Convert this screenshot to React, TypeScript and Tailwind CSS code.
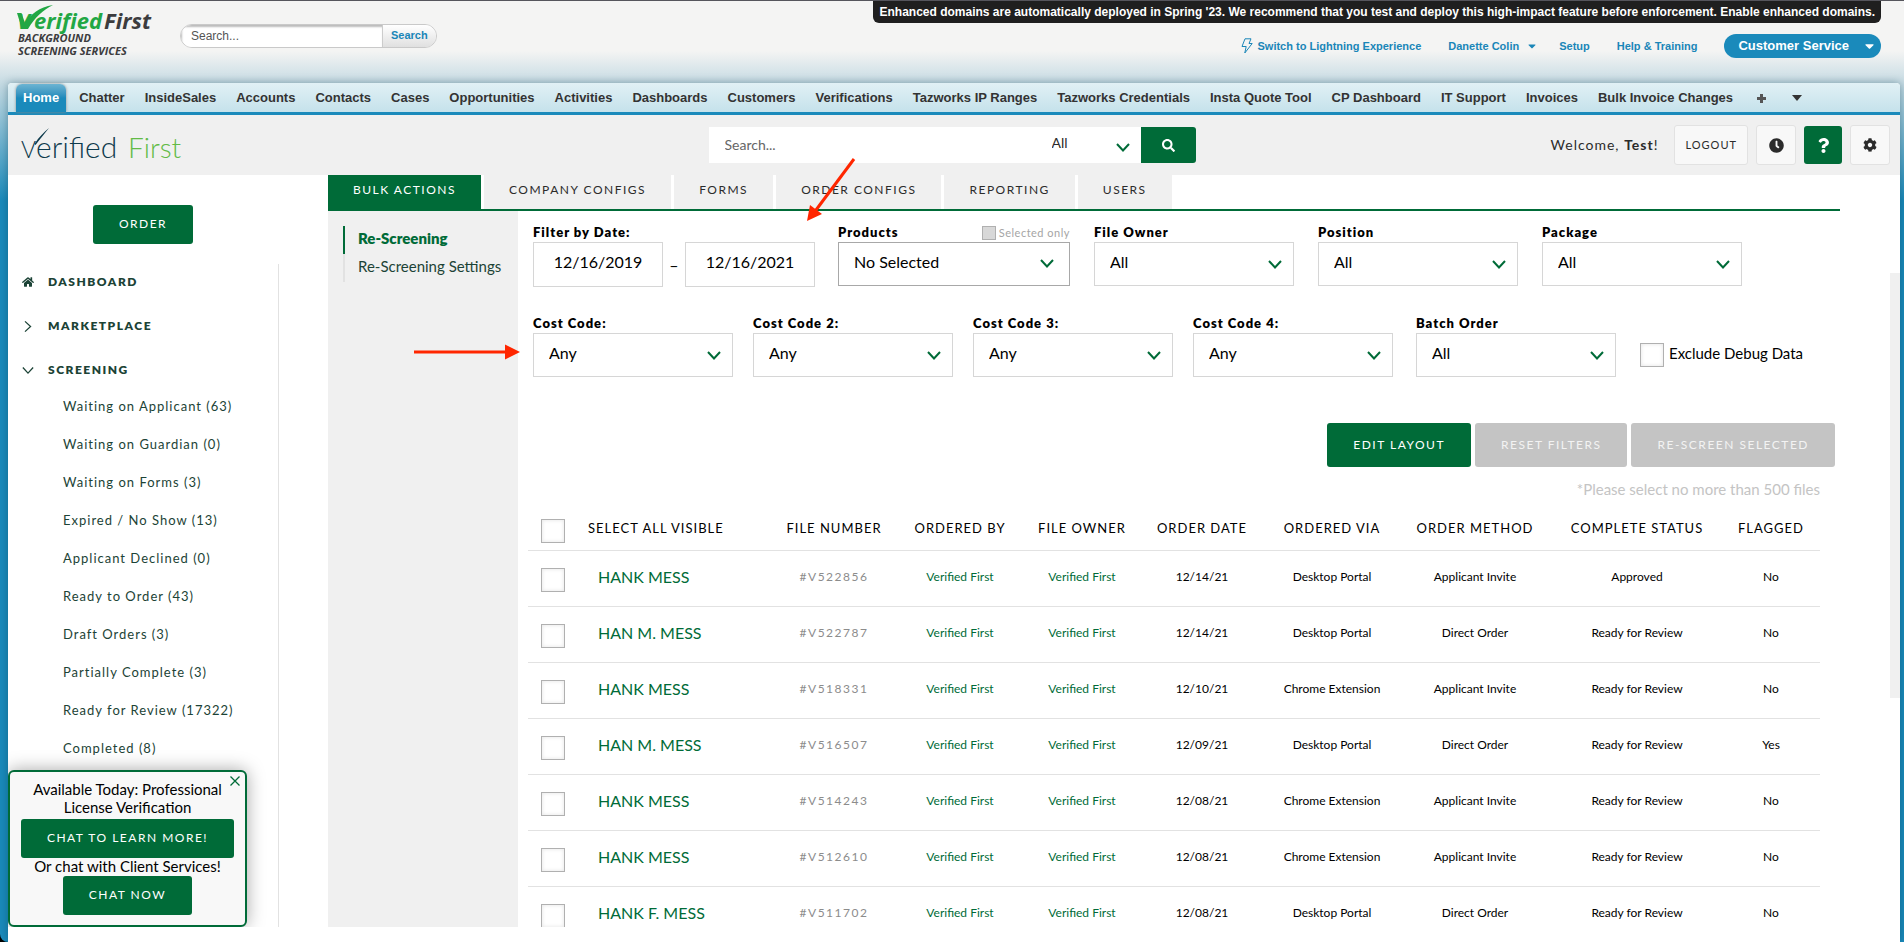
import { useState } from "react";
import { FaCaretDown, FaClock, FaCog, FaHome, FaQuestion, FaSearch } from "react-icons/fa";

const crmTabs = [
  "Home", "Chatter", "InsideSales", "Accounts", "Contacts", "Cases", "Opportunities", "Activities",
  "Dashboards", "Customers", "Verifications", "Tazworks IP Ranges", "Tazworks Credentials",
  "Insta Quote Tool", "CP Dashboard", "IT Support", "Invoices", "Bulk Invoice Changes",
];

const adminTabs = ["Bulk Actions", "Company Configs", "Forms", "Order Configs", "Reporting", "Users"];

const screeningLinks = [
  "Waiting on Applicant (63)",
  "Waiting on Guardian (0)",
  "Waiting on Forms (3)",
  "Expired / No Show (13)",
  "Applicant Declined (0)",
  "Ready to Order (43)",
  "Draft Orders (3)",
  "Partially Complete (3)",
  "Ready for Review (17322)",
  "Completed (8)",
];

const columns = [
  { label: "File Number", width: "w-[120px]" },
  { label: "Ordered By", width: "w-[132px]" },
  { label: "File Owner", width: "w-[112px]" },
  { label: "Order Date", width: "w-[128px]" },
  { label: "Ordered Via", width: "w-[132px]" },
  { label: "Order Method", width: "w-[154px]" },
  { label: "Complete Status", width: "w-[170px]" },
  { label: "Flagged", width: "w-[98px]" },
];

const files = [
  { name: "HANK MESS", number: "#V522856", date: "12/14/21", via: "Desktop Portal", method: "Applicant Invite", status: "Approved", flagged: "No" },
  { name: "HAN M. MESS", number: "#V522787", date: "12/14/21", via: "Desktop Portal", method: "Direct Order", status: "Ready for Review", flagged: "No" },
  { name: "HANK MESS", number: "#V518331", date: "12/10/21", via: "Chrome Extension", method: "Applicant Invite", status: "Ready for Review", flagged: "No" },
  { name: "HAN M. MESS", number: "#V516507", date: "12/09/21", via: "Desktop Portal", method: "Direct Order", status: "Ready for Review", flagged: "Yes" },
  { name: "HANK MESS", number: "#V514243", date: "12/08/21", via: "Chrome Extension", method: "Applicant Invite", status: "Ready for Review", flagged: "No" },
  { name: "HANK MESS", number: "#V512610", date: "12/08/21", via: "Chrome Extension", method: "Applicant Invite", status: "Ready for Review", flagged: "No" },
  { name: "HANK F. MESS", number: "#V511702", date: "12/08/21", via: "Desktop Portal", method: "Direct Order", status: "Ready for Review", flagged: "No" },
];

const checkboxClass =
  "block h-6 w-6 shrink-0 appearance-none border border-[#b0b0b0] bg-white shadow-[inset_0_0_4px_#e4e4e4] checked:bg-[#006b38]";

function Chevron({ className = "h-[9px] w-[14px]", weight = 2 }: { className?: string; weight?: number }) {
  return (
    <svg viewBox="0 0 14 9" className={className} fill="none" stroke="currentColor" strokeWidth={weight}>
      <path d="M1 1l6 6.5L13 1" />
    </svg>
  );
}

function SelectField({ id, label, value, dark = false }: { id: string; label: string; value: string; dark?: boolean }) {
  return (
    <div className={dark ? "w-[232px]" : "w-[200px]"}>
      <div className="flex h-5 items-center justify-between pt-[2px]">
        <label htmlFor={id} className="text-[13px] font-extrabold tracking-[1px]">{label}</label>
        {dark && (
          <label className="flex items-center gap-[3px] text-[11px] tracking-[0.5px] text-[#a5a5a5]">
            <input type="checkbox" disabled className="h-[14px] w-[14px] appearance-none border border-[#b0b0b0] bg-[#d8d8d8]" />
            Selected only
          </label>
        )}
      </div>
      <div className="relative">
        <select
          id={id}
          className={`h-11 w-full appearance-none border bg-white px-[15px] pb-1 text-base ${dark ? "border-[#a8a8a8]" : "border-[#d6d6d6]"}`}
        >
          <option>{value}</option>
        </select>
        <Chevron className={`pointer-events-none absolute h-[9px] w-[14px] text-[#006b38] ${dark ? "top-[17px] right-4" : "top-[18px] right-3"}`} />
      </div>
    </div>
  );
}

function CrmLogo() {
  return (
    <svg viewBox="0 0 144 60" className="h-[60px] w-36" role="img" aria-label="Verified First">
      <g fontFamily="Open Sans, sans-serif" fontSize="22" fontWeight="700" fontStyle="italic" fill="#22a744">
        <text x="3" y="28">V</text>
        <text x="20" y="28">erified</text>
        <text x="90" y="28" fill="#3c3c3e">First</text>
      </g>
      <path d="M3 12h4.500L11 22C17 13 25 6 39 4 29 9 21 16 14 28H8z" fill="#22a744" />
      <g fontFamily="Open Sans, sans-serif" fontSize="11" fontWeight="700" fontStyle="italic" fill="#3c3c3e">
        <text x="4" y="41">BACKGROUND</text>
        <text x="4" y="54">SCREENING SERVICES</text>
      </g>
    </svg>
  );
}

function PortalLogo() {
  return (
    <svg viewBox="0 0 172 40" className="h-10 w-[172px]" role="img" aria-label="Verified First">
      <g fontFamily="Lato, sans-serif" fontWeight="300" fill="#0d3a4c">
        <text x="7" y="33" fontSize="23">V</text>
        <text x="22" y="33" fontSize="30">erified</text>
        <text x="114" y="33" fontSize="28" fill="#62bb46">First</text>
      </g>
      <path d="M20.500 19C25 12 30 7 35 3 31 8 27 13 21.500 20z" fill="#0d3a4c" />
    </svg>
  );
}

function CrmHeader() {
  return (
    <header className="flex h-[82px] items-start justify-between font-['Liberation_Sans',Arial,sans-serif]">
      <div className="flex items-start pl-[14px]">
        <CrmLogo />
        <form className="mt-[23px] ml-[22px] flex h-6 overflow-hidden rounded-full border border-[#c9c9c9]">
          <input
            type="text"
            placeholder="Search..."
            aria-label="Search records"
            className="w-[201px] bg-white pl-[10px] text-xs shadow-[inset_1px_2px_2px_#bbb] placeholder:text-[#555]"
          />
          <button type="button" className="border-l border-[#ccc] bg-linear-to-b from-white to-[#e0e0e0] px-2 pb-[2px] text-[11px] font-bold text-[#1a86b8]">
            Search
          </button>
        </form>
      </div>
      <div className="mr-[23px] flex flex-col items-end">
        <p className="flex h-[22px] items-center rounded-b-md bg-[#1f1f1f] px-[6px] text-xs font-bold whitespace-nowrap text-white">
          Enhanced domains are automatically deployed in Spring '23. We recommend that you test and deploy this high-impact feature before enforcement. Enable enhanced domains.
        </p>
        <nav className="mt-[11px] flex h-6 items-center text-[11px] font-bold text-[#1a86b8]">
          <a href="#lightning" className="flex items-center gap-1">
            <svg viewBox="0 0 12 16" className="h-4 w-3" fill="none" stroke="currentColor" strokeLinejoin="round">
              <path d="M4 .8h6L8 5.500h3.200L3.800 15l1.400-6.500H1z" />
            </svg>
            Switch to Lightning Experience
          </a>
          <a href="#user" className="ml-[27px] flex items-center gap-2">
            Danette Colin
            <FaCaretDown className="h-3 w-[10px]" />
          </a>
          <a href="#setup" className="ml-[22px]">Setup</a>
          <a href="#help" className="ml-[27px]">Help &amp; Training</a>
          <button type="button" className="ml-[27px] flex h-6 items-center gap-[14px] rounded-full bg-[#1a8abb] pr-[5px] pl-[14px] text-[13px] font-bold text-white">
            Customer Service
            <FaCaretDown className="h-[14px]" />
          </button>
        </nav>
      </div>
    </header>
  );
}

function CrmTabBar() {
  return (
    <nav className="flex h-8 shrink-0 items-end rounded-t border-b-[3px] border-[#1a8abb] bg-linear-to-b from-[#e1f0f5] to-[#c5e2eb] pl-2 font-['Liberation_Sans',Arial,sans-serif] text-[13px] font-bold whitespace-nowrap text-[#333]">
      {crmTabs.map((tab, i) => (
        <a
          key={tab}
          href="#tab"
          className={
            i === 0
              ? "mr-[3px] flex h-7 items-center rounded-t-md bg-linear-to-b from-[#6cb4d2] to-[#1a8abb] to-50% px-[7px] text-white shadow-[0_0_3px_#888]"
              : "flex h-7 items-center px-[10px]"
          }
        >
          {tab}
        </a>
      ))}
      <a href="#more" aria-label="All tabs" className="flex h-7 items-center px-[14px]">
        <svg viewBox="0 0 9 9" className="h-[9px] w-[9px]" fill="#555"><path d="M3 0h3v3h3v3H6v3H3V6H0V3h3z" /></svg>
      </a>
      <button type="button" aria-label="More tabs" className="flex h-7 items-center px-3">
        <svg viewBox="0 0 10 6" className="h-[6px] w-[10px]" fill="#333"><path d="M0 0h10L5 6z" /></svg>
      </button>
    </nav>
  );
}

function PortalHeader() {
  const square = "flex h-10 w-10 items-center justify-center rounded-[3px] border border-[#e2e2e2] bg-[#f8f8f8] text-[#2b2b2b]";
  return (
    <div className="grid h-[60px] shrink-0 grid-cols-[1fr_auto_1fr] items-center bg-[#f0f0f0] pr-[10px] pl-[6px] text-[#2b2b2b]">
      <PortalLogo />
      <form className="flex h-9">
        <input type="text" placeholder="Search..." aria-label="Search files" className="w-[328px] bg-white px-4 text-sm placeholder:text-[#666]" />
        <div className="relative w-[104px] bg-white">
          <select aria-label="Search in" className="h-9 w-full appearance-none bg-white pb-1 pl-[15px] text-sm">
            <option>All</option>
          </select>
          <Chevron className="pointer-events-none absolute top-4 right-[11px] h-[9px] w-[14px] text-[#006b38]" />
        </div>
        <button type="button" aria-label="Search" className="flex w-[55px] items-center justify-center rounded-r-[3px] bg-[#006b38] text-white">
          <FaSearch size={13} />
        </button>
      </form>
      <div className="flex items-center justify-end gap-2">
        <p className="mr-2 text-sm tracking-[1px]">Welcome, <b>Test</b>!</p>
        <button type="button" className="h-10 rounded-[3px] border border-[#e2e2e2] bg-[#f8f8f8] px-[10px] text-[11px] tracking-[1px]">LOGOUT</button>
        <button type="button" aria-label="History" className={square}><FaClock size={15} /></button>
        <button type="button" aria-label="Help" className="flex h-[38px] w-[38px] items-center justify-center rounded-[3px] bg-[#006b38] text-white">
          <FaQuestion size={15} />
        </button>
        <button type="button" aria-label="Settings" className={square}><FaCog size={14} /></button>
      </div>
    </div>
  );
}

function Sidebar() {
  const heading = "flex h-11 items-center gap-[14px] pb-2 text-xs font-extrabold tracking-[1.500px]";
  return (
    <aside className="w-[271px] shrink-0 pt-[30px] text-[#1c4336]">
      <button type="button" className="ml-[85px] block h-[39px] w-[100px] rounded-[3px] bg-[#006b38] pb-[2px] text-xs tracking-[1.500px] text-white">ORDER</button>
      <nav className="mt-5 h-full border-r border-[#e2e2e2] pl-[14px]">
        <a href="#dashboard" className={heading}><FaHome className="w-3" />DASHBOARD</a>
        <a href="#marketplace" className={heading}>
          <Chevron className="h-[9px] w-3 -rotate-90" weight={1.5} />MARKETPLACE
        </a>
        <a href="#screening" className={heading}>
          <Chevron className="h-[9px] w-3" weight={1.5} />SCREENING
        </a>
        <ul className="-mt-2 pl-[41px] text-[13px] tracking-[1px]">
          {screeningLinks.map((link) => (
            <li key={link}>
              <a href="#files" className="flex h-[38px] items-center">{link}</a>
            </li>
          ))}
        </ul>
      </nav>
    </aside>
  );
}

function Filters() {
  const dateClass = "h-[45px] w-[130px] border border-[#d6d6d6] bg-white pb-[6px] text-center text-base";
  const [from, setFrom] = useState("12/16/2019");
  const [to, setTo] = useState("12/16/2021");
  return (
    <form className="pt-[11px] pl-[15px]">
      <div className="flex items-start">
        <div className="mr-[23px]">
          <label htmlFor="date-from" className="flex h-5 items-center pt-[2px] text-[13px] font-extrabold tracking-[1px]">Filter by Date:</label>
          <div className="flex items-center">
            <input id="date-from" type="text" value={from} onChange={(e) => setFrom(e.target.value)} className={dateClass} />
            <span className="w-[22px] text-center">–</span>
            <input type="text" aria-label="Date to" value={to} onChange={(e) => setTo(e.target.value)} className={dateClass} />
          </div>
        </div>
        <div className="flex gap-6">
          <SelectField id="products" label="Products" value="No Selected" dark />
          <SelectField id="owner" label="File Owner" value="All" />
          <SelectField id="position" label="Position" value="All" />
          <SelectField id="package" label="Package" value="All" />
        </div>
      </div>
      <div className="mt-[26px] flex items-start gap-5">
        <SelectField id="cost-1" label="Cost Code:" value="Any" />
        <SelectField id="cost-2" label="Cost Code 2:" value="Any" />
        <SelectField id="cost-3" label="Cost Code 3:" value="Any" />
        <SelectField id="cost-4" label="Cost Code 4:" value="Any" />
        <div className="ml-[3px] flex items-start gap-6">
          <SelectField id="batch" label="Batch Order" value="All" />
          <label className="mt-[30px] flex gap-[5px] text-[15px] leading-5">
            <input type="checkbox" className={checkboxClass} />
            Exclude Debug Data
          </label>
        </div>
      </div>
    </form>
  );
}

function FileTable() {
  return (
    <table className="w-full table-fixed border-collapse text-center text-xs">
      <thead>
        <tr className="h-[45px] border-b border-[#e2e2e2] text-[13px] tracking-[1px]">
          <th className="w-[52px] pt-2 pl-[13px]"><input type="checkbox" id="select-all" className={checkboxClass} /></th>
          <th className="pt-[2px] pl-2 text-left font-normal"><label htmlFor="select-all">SELECT ALL VISIBLE</label></th>
          {columns.map((c) => (
            <th key={c.label} className={`${c.width} pt-[2px] font-normal whitespace-nowrap uppercase`}>{c.label}</th>
          ))}
        </tr>
      </thead>
      <tbody>
        {files.map((f) => (
          <tr key={f.number} className="h-14 border-b border-[#e2e2e2] *:pb-[2px]">
            <td className="pt-[6px] pl-[13px]"><input type="checkbox" aria-label={`Select ${f.number}`} className={checkboxClass} /></td>
            <td className="pl-[18px] text-left text-base text-[#006b38]"><a href="#file">{f.name}</a></td>
            <td className="text-xs tracking-[1.500px] text-[#8c8c8c]">{f.number}</td>
            <td><a href="#by" className="text-[#006b38]">Verified First</a></td>
            <td><a href="#owner" className="text-[#006b38]">Verified First</a></td>
            <td>{f.date}</td>
            <td>{f.via}</td>
            <td>{f.method}</td>
            <td>{f.status}</td>
            <td>{f.flagged}</td>
          </tr>
        ))}
      </tbody>
    </table>
  );
}

function ChatBox() {
  const [open, setOpen] = useState(true);
  if (!open) return null;
  const green = "h-[39px] rounded-[3px] bg-[#006b38] px-[26px] pb-[2px] text-xs tracking-[1.500px] text-white";
  return (
    <section className="absolute bottom-0 left-0 flex h-[157px] w-[239px] flex-col items-center rounded-md border-2 border-[#006b38] bg-[#f8f8f8] pt-2 text-center text-[15px] leading-[18px] text-black shadow-[0_0_18px_rgba(0,0,0,0.35)]">
      <button type="button" aria-label="Close" onClick={() => setOpen(false)} className="absolute top-1 right-[5px] text-[#006b38]">
        <svg viewBox="0 0 10 10" className="h-[10px] w-[10px]" stroke="currentColor" strokeWidth="1.300"><path d="M.5.5l9 9M9.500.5l-9 9" /></svg>
      </button>
      <p className="mb-[3px]">Available Today: Professional<br />License Verification</p>
      <button type="button" className={green}>CHAT TO LEARN MORE!</button>
      <p className="leading-4">Or chat with Client Services!</p>
      <button type="button" className={`${green} mt-[2px]`}>CHAT NOW</button>
    </section>
  );
}

export default function App() {
  const action = "h-11 rounded-[3px] px-[26px] text-xs tracking-[1.500px]";
  return (
    <div className="h-screen overflow-hidden bg-black font-[Lato,'Noto_Sans',sans-serif] text-black">
      <div className="relative flex h-full flex-col rounded-bl-lg border-t border-[#55555c] bg-[linear-gradient(to_bottom,#f4f4f3_50px,#c6dbe3_82px,#1a8abb_200px)]">
        <CrmHeader />
        <div className="mr-1 ml-2 flex min-h-0 flex-1 flex-col rounded-t bg-white shadow-[0_0_8px_rgba(0,50,70,0.4)]">
          <CrmTabBar />
          <PortalHeader />
          <div className="relative mb-[15px] flex min-h-0 flex-1 overflow-hidden">
            <Sidebar />
            <main className="mr-[60px] ml-[49px] flex min-w-0 flex-1 flex-col">
              <nav className="flex h-9 shrink-0 gap-[3px] border-b-2 border-[#006b38] text-xs tracking-[1.500px] uppercase">
                {adminTabs.map((tab, i) => (
                  <a
                    key={tab}
                    href="#admin"
                    className={`flex items-center px-[25px] pb-[5px] ${i === 0 ? "bg-[#006b38] text-white" : "bg-[#f0f0f0] text-[#2b2b2b]"}`}
                  >
                    {tab}
                  </a>
                ))}
              </nav>
              <div className="flex min-h-0 flex-1">
                <nav className="w-[190px] shrink-0 bg-[#f0f0f0] pt-[15px] pl-[15px] text-[15px] whitespace-nowrap">
                  <a href="#rescreening" className="flex h-7 items-center border-l-2 border-[#006b38] pb-1 pl-[13px] font-extrabold text-[#006b38]">Re-Screening</a>
                  <a href="#rescreening-settings" className="flex h-7 items-center border-l-2 border-[#e2e2e2] pb-1 pl-[13px] text-[#1c4336]">Re-Screening Settings</a>
                </nav>
                <div className="min-w-0 flex-1">
                  <Filters />
                  <div className="mt-[46px] mr-[5px] flex justify-end gap-1">
                    <button type="button" className={`${action} bg-[#006b38] text-white`}>EDIT LAYOUT</button>
                    <button type="button" disabled className={`${action} bg-[#c4c4c4] text-[#f3f3f3]`}>RESET FILTERS</button>
                    <button type="button" disabled className={`${action} bg-[#c4c4c4] text-[#f3f3f3]`}>RE-SCREEN SELECTED</button>
                  </div>
                  <div className="mr-5 ml-[10px]">
                    <p className="pt-3 pb-[6px] text-right text-[15px] leading-5 text-[#c4c4c4]">*Please select no more than 500 files</p>
                    <FileTable />
                  </div>
                </div>
              </div>
            </main>
            <div className="absolute top-[98px] right-0 h-[425px] w-[10px] bg-[#f0f0f0]" />
            <ChatBox />
          </div>
        </div>
        {/* red callout arrows over the filters */}
        <svg viewBox="0 0 50 64" className="pointer-events-none absolute top-[157px] left-[806px] h-16 w-[50px]" stroke="#ff2600" fill="#ff2600">
          <path d="M48 1L10 52" strokeWidth="3" />
          <path d="M1 63l3-16 12 9z" stroke="none" />
        </svg>
        <svg viewBox="0 0 106 16" className="pointer-events-none absolute top-[343px] left-[414px] h-4 w-[106px]" stroke="#ff2600" fill="#ff2600">
          <path d="M0 8h94" strokeWidth="3" />
          <path d="M106 8L91 .5v15z" stroke="none" />
        </svg>
      </div>
    </div>
  );
}
